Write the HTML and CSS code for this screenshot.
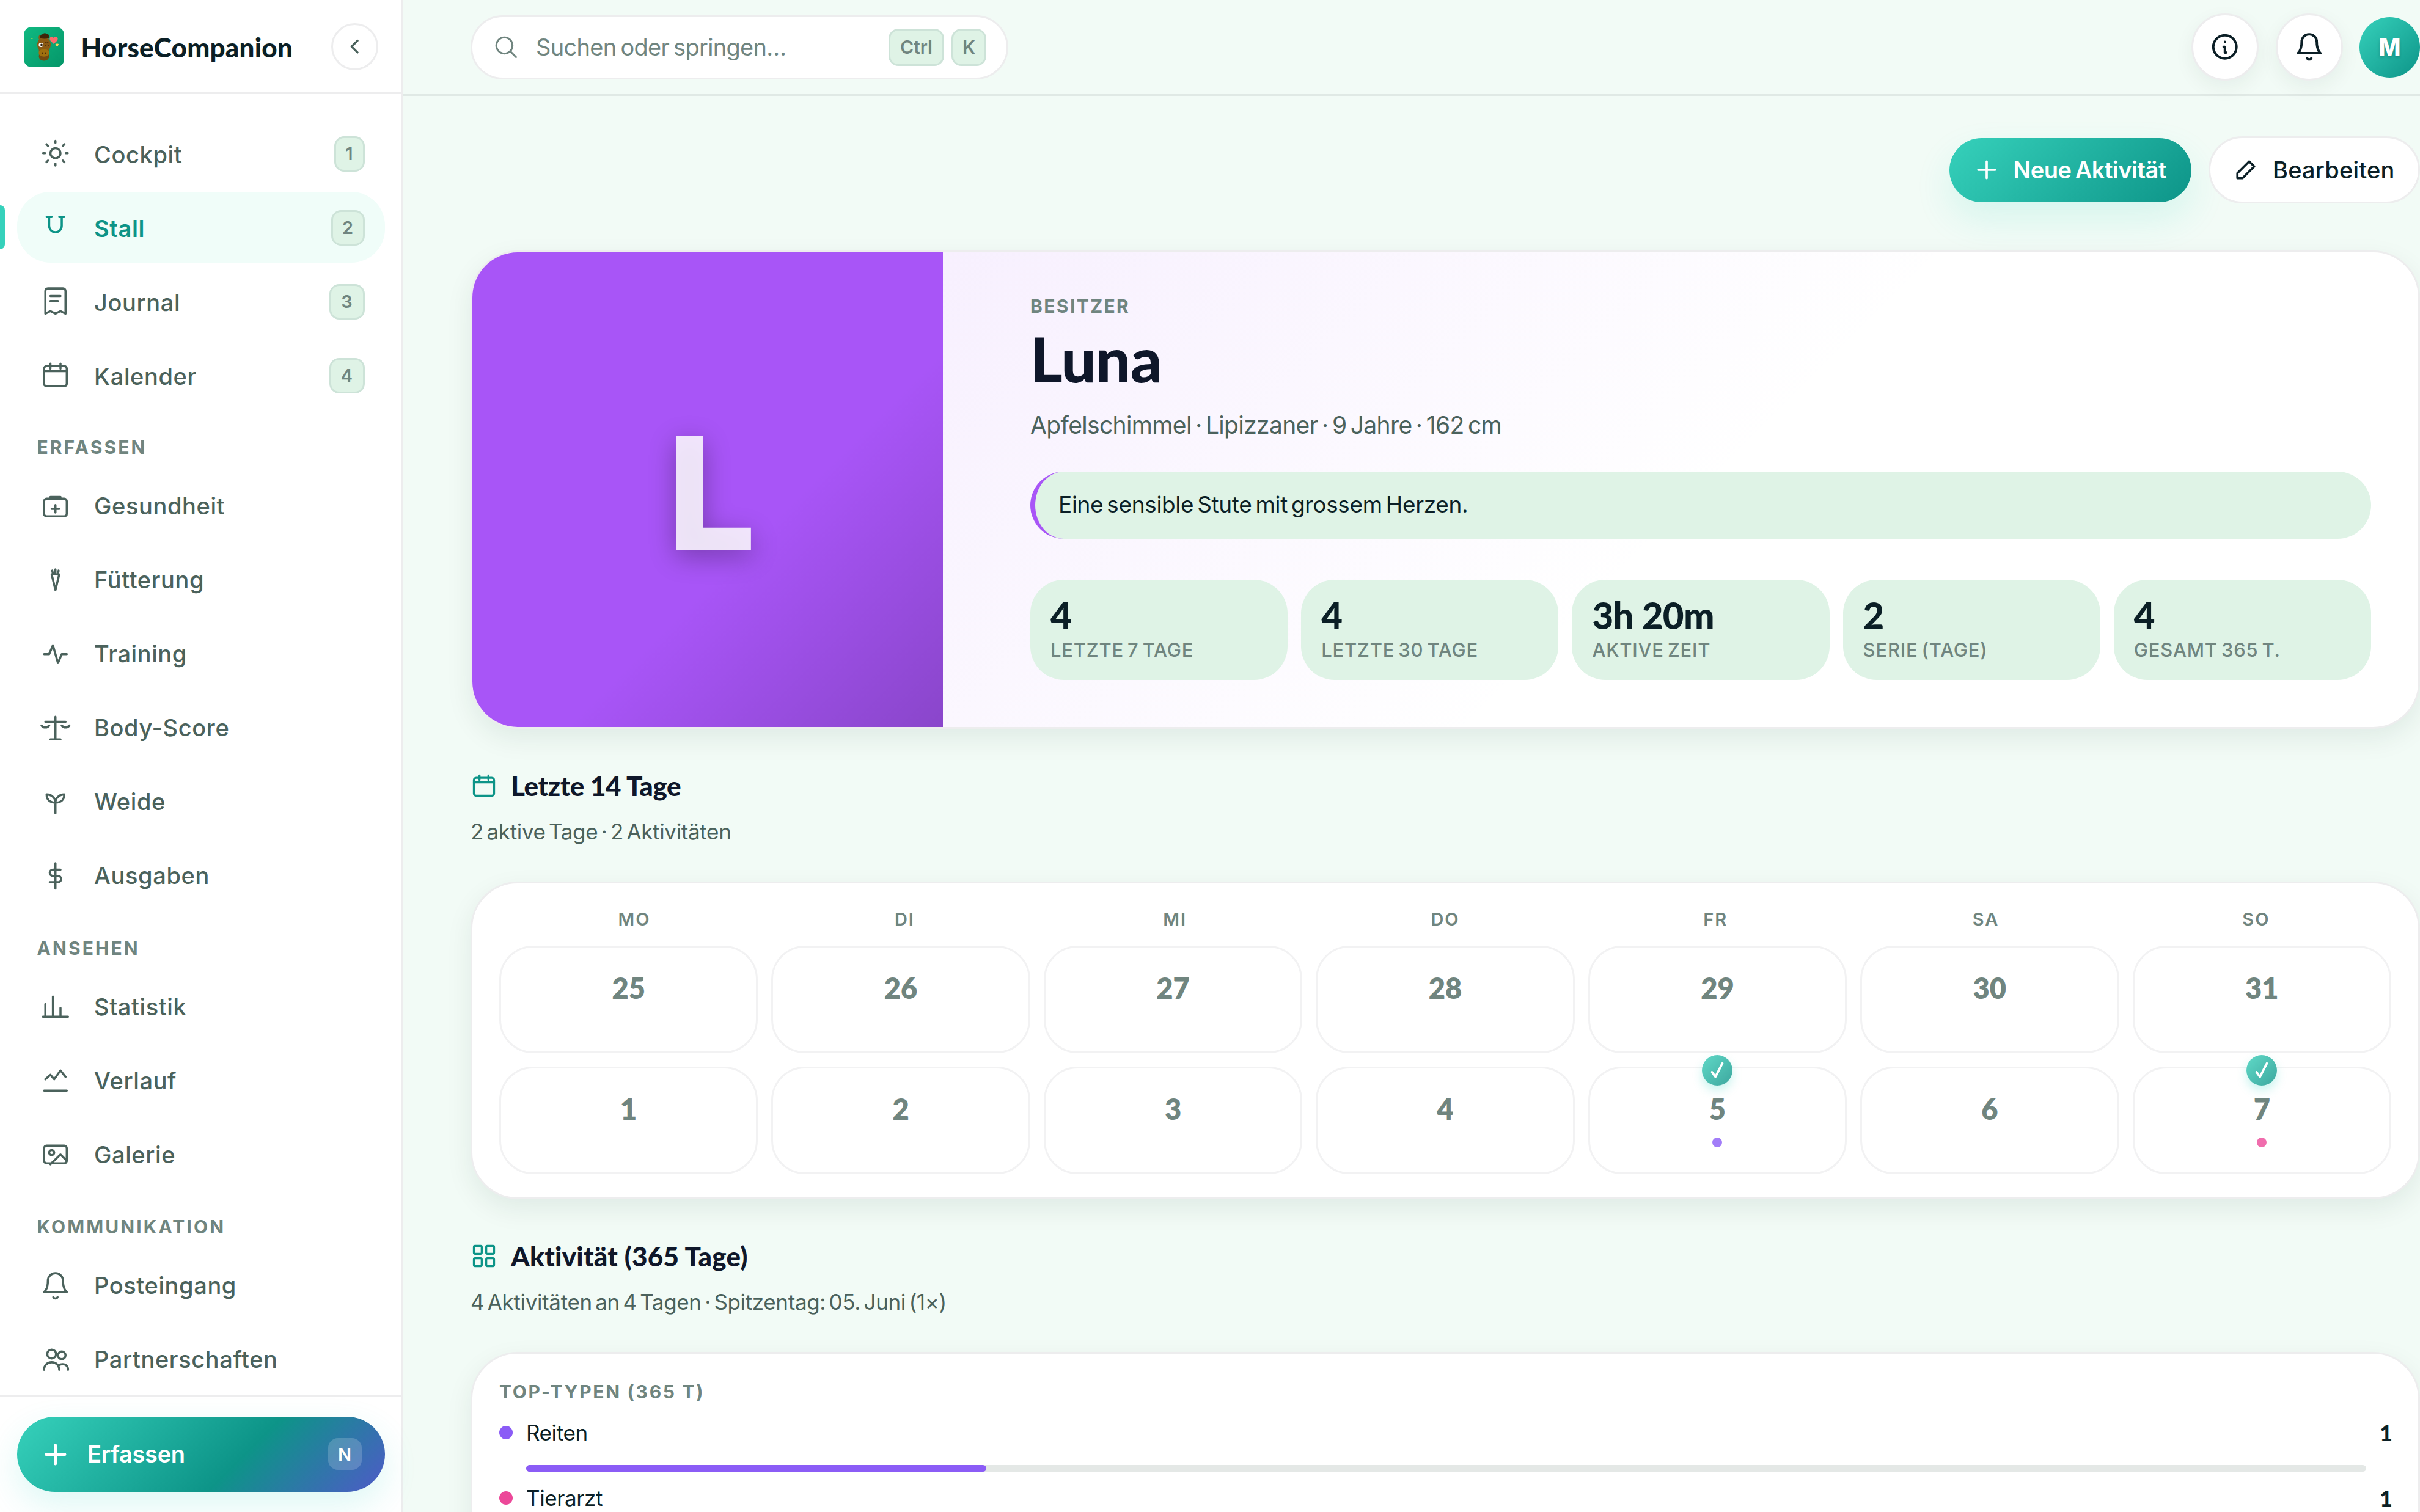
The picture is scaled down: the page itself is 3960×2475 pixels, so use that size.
FILE: index.html
```html
<!DOCTYPE html>
<html lang="de">
<head>
    <meta charset="UTF-8">
    <meta name="viewport" content="width=device-width, initial-scale=1.0">
    <title>Luna - HorseCompanion</title>
    <link rel="stylesheet" href="styles.css">
</head>
<body>
    <!-- Icon-Sprite -->
    <svg class="sprite" aria-hidden="true">
        <symbol id="i-sun" viewBox="0 0 24 24"><circle cx="12" cy="12" r="4"/><path d="M12 2.2v1.6M12 20.2v1.6M2.2 12h1.6M20.2 12h1.6M4.93 4.93l1.2 1.2M17.87 17.87l1.2 1.2M4.93 19.07l1.2-1.2M17.87 6.13l1.2-1.2"/></symbol>
        <symbol id="i-shoe" viewBox="0 0 24 24"><path d="M5 4h4M15 4h4M7 4v7a5 5 0 0 0 10 0V4"/></symbol>
        <symbol id="i-journal" viewBox="0 0 24 24"><path d="M4 22V4a2 2 0 0 1 2-2h12a2 2 0 0 1 2 2v18l-4-2-4 2-4-2zM8 8h8M8 12h6"/></symbol>
        <symbol id="i-cal" viewBox="0 0 24 24"><rect x="3" y="5" width="18" height="16" rx="2"/><path d="M3 9h18M8 3v4M16 3v4"/></symbol>
        <symbol id="i-health" viewBox="0 0 24 24"><rect x="3" y="6" width="18" height="14" rx="2"/><path d="M8 6V4.6h8V6M12 11v6M9 14h6"/></symbol>
        <symbol id="i-carrot" viewBox="0 0 24 24"><path d="M9 7.4h6l-3 12.4zM12 7V3.4M10 7l-.5-2.6M14 7l.5-2.6"/></symbol>
        <symbol id="i-pulse" viewBox="0 0 24 24"><path d="M3 12h4l3-7 4 14 3-7h4"/></symbol>
        <symbol id="i-scale" viewBox="0 0 24 24"><path d="M12 3v18M4 7h16M8 21h8M1 10a3.7 3.7 0 0 0 6 0M17 10a3.7 3.7 0 0 0 6 0"/></symbol>
        <symbol id="i-sprout" viewBox="0 0 24 24"><path d="M12 21v-9M12 12.500C7.500 12.500 5 10 5 6c3.500 0 7 2.500 7 6.500M12 12.500C16.500 12.500 19 10 19 6c-3.500 0-7 2.500-7 6.500"/></symbol>
        <symbol id="i-dollar" viewBox="0 0 24 24"><path d="M12 2v20M16 7h-6a2.500 2.500 0 0 0 0 5h4a2.500 2.500 0 0 1 0 5H7.500"/></symbol>
        <symbol id="i-stats" viewBox="0 0 24 24"><path d="M2 20h20M4 20V10M10 20V4M16 20v-7"/></symbol>
        <symbol id="i-trend" viewBox="0 0 24 24"><path d="M3 20h18M4 11l4-3.500 3 3.500 5-7 4 5"/></symbol>
        <symbol id="i-image" viewBox="0 0 24 24"><rect x="3" y="5" width="18" height="14" rx="2"/><circle cx="9" cy="10.500" r="2"/><path d="M8 19.800l8-7.800 5 5"/></symbol>
        <symbol id="i-bell" viewBox="0 0 24 24"><path d="M6 8a6 6 0 0 1 12 0c0 7 3 9 3 9H3s3-2 3-9M10.300 21a1.940 1.940 0 0 0 3.400 0"/></symbol>
        <symbol id="i-people" viewBox="0 0 24 24"><circle cx="9" cy="7.500" r="3.500"/><circle cx="17" cy="8.500" r="3"/><path d="M3 20c0-3.500 2.500-6 6-6s6 2.500 6 6M14.500 16.500c.9-.7 2-1 3.200-1 2.600 0 4.300 1.800 4.300 4.500"/></symbol>
        <symbol id="i-search" viewBox="0 0 24 24"><circle cx="10.600" cy="10.600" r="7.200"/><path d="M21 21l-5-5"/></symbol>
        <symbol id="i-info" viewBox="0 0 24 24"><circle cx="12" cy="12" r="9.200"/><path d="M12 8v.1M11 12h1v4.500h1"/></symbol>
        <symbol id="i-plus" viewBox="0 0 24 24"><path d="M12 4.500v15M4.500 12h15"/></symbol>
        <symbol id="i-pen" viewBox="0 0 24 24"><path d="M4.500 19.500V15L15 4.500l4.500 4.500L9 19.500z"/></symbol>
        <symbol id="i-grid" viewBox="0 0 24 24"><rect x="3" y="3" width="7" height="7" rx="1"/><rect x="14" y="3" width="7" height="7" rx="1"/><rect x="3" y="14" width="7" height="7" rx="1"/><rect x="14" y="14" width="7" height="7" rx="1"/></symbol>
        <symbol id="i-left" viewBox="0 0 24 24"><path d="M15 6l-6 6 6 6"/></symbol>
        <symbol id="i-check" viewBox="0 0 24 24"><path d="M6 14l4 5.500L18 4"/></symbol>
    </svg>

    <div class="app">
        <aside class="sidebar">
            <div class="sidebar-head">
                <svg class="logo" viewBox="0 0 66 66">
                    <defs>
                        <linearGradient id="lg" x1="0" y1="0" x2="1" y2="1">
                            <stop offset="0" stop-color="#10b981"/>
                            <stop offset="1" stop-color="#059669"/>
                        </linearGradient>
                    </defs>
                    <rect width="66" height="66" rx="13" fill="url(#lg)"/>
                    <path d="M24.500 20q-1-5 1.500-7l3 6z" fill="#8b5a14"/>
                    <ellipse cx="33" cy="29" rx="11" ry="12.500" fill="#8b5a14"/>
                    <path d="M24 34l2 14q7 12 14 0l2-14z" fill="#8b5a14"/>
                    <ellipse cx="33" cy="48" rx="8.500" ry="7.500" fill="#744a10"/>
                    <ellipse cx="33" cy="42.500" rx="8.800" ry="6.200" fill="#a0700f"/>
                    <ellipse cx="30.500" cy="43" rx="1" ry="1.500" fill="#4a2c0a"/>
                    <ellipse cx="35.500" cy="43" rx="1" ry="1.500" fill="#4a2c0a"/>
                    <path d="M27 18q-1-6 4-6 2-3 6-1 5 0 4 7-7 3-14 0z" fill="#3f2408"/>
                    <circle cx="28" cy="29.500" r="3.600" fill="#fff"/>
                    <circle cx="29" cy="29.500" r="1.900" fill="#2a1b0a"/>
                    <path d="M34.500 26q3-2 6 0M35 30.500q3-2.500 6 0" fill="none" stroke="#4a2c0a"/>
                    <path d="M49 28l-6-6q-2-5 2.500-6 2.500 0 3.500 2.300 1-2.300 3.500-2.300 4.500 1 2.500 6z" fill="#ff6b6b"/>
                    <path d="M54.500 25.500l.9 2.200 2.200.2-1.700 1.500.5 2.300-1.900-1.200-2 1.200.6-2.300-1.700-1.500 2.200-.2z" fill="#ffd35a"/>
                    <rect x="12" y="18.500" width="2.500" height="1.200" fill="#a8d84e"/>
                </svg>
                <span class="brand">HorseCompanion</span>
                <button class="collapse"><svg class="icon"><use href="#i-left"/></svg></button>
            </div>

            <nav class="nav">
                <a class="nav-item top-item"><svg class="icon"><use href="#i-sun"/></svg><span class="nav-text">Cockpit</span><kbd class="k1">1</kbd></a>
                <a class="nav-item top-item active"><svg class="icon"><use href="#i-shoe"/></svg><span class="nav-text">Stall</span><kbd class="k2">2</kbd></a>
                <a class="nav-item top-item"><svg class="icon"><use href="#i-journal"/></svg><span class="nav-text">Journal</span><kbd class="k3">3</kbd></a>
                <a class="nav-item top-item"><svg class="icon"><use href="#i-cal"/></svg><span class="nav-text">Kalender</span><kbd class="k3">4</kbd></a>

                <div class="nav-title">ERFASSEN</div>
                <a class="nav-item"><svg class="icon"><use href="#i-health"/></svg><span class="nav-text">Gesundheit</span></a>
                <a class="nav-item"><svg class="icon"><use href="#i-carrot"/></svg><span class="nav-text">Fütterung</span></a>
                <a class="nav-item"><svg class="icon"><use href="#i-pulse"/></svg><span class="nav-text">Training</span></a>
                <a class="nav-item"><svg class="icon"><use href="#i-scale"/></svg><span class="nav-text">Body-Score</span></a>
                <a class="nav-item"><svg class="icon"><use href="#i-sprout"/></svg><span class="nav-text">Weide</span></a>
                <a class="nav-item"><svg class="icon"><use href="#i-dollar"/></svg><span class="nav-text">Ausgaben</span></a>

                <div class="nav-title">ANSEHEN</div>
                <a class="nav-item"><svg class="icon"><use href="#i-stats"/></svg><span class="nav-text">Statistik</span></a>
                <a class="nav-item"><svg class="icon"><use href="#i-trend"/></svg><span class="nav-text">Verlauf</span></a>
                <a class="nav-item"><svg class="icon"><use href="#i-image"/></svg><span class="nav-text">Galerie</span></a>

                <div class="nav-title">KOMMUNIKATION</div>
                <a class="nav-item"><svg class="icon"><use href="#i-bell"/></svg><span class="nav-text">Posteingang</span></a>
                <a class="nav-item"><svg class="icon"><use href="#i-people"/></svg><span class="nav-text">Partnerschaften</span></a>
            </nav>

            <div class="sidebar-foot">
                <button class="capture">
                    <svg class="icon"><use href="#i-plus"/></svg>
                    <span class="capture-text">Erfassen</span>
                    <kbd>N</kbd>
                </button>
            </div>
        </aside>

        <div class="main">
            <header class="topbar">
                <div class="search">
                    <svg class="icon"><use href="#i-search"/></svg>
                    <span class="search-text">Suchen oder springen…</span>
                    <kbd class="key-ctrl">Ctrl</kbd>
                    <kbd class="key-k">K</kbd>
                </div>
                <div class="topbar-right">
                    <button class="round"><svg class="icon"><use href="#i-info"/></svg></button>
                    <button class="round"><svg class="icon"><use href="#i-bell"/></svg></button>
                    <div class="avatar">M</div>
                </div>
            </header>

            <main class="content">
                <div class="actions">
                    <button class="btn btn-primary"><svg class="icon"><use href="#i-plus"/></svg><span>Neue Aktivität</span></button>
                    <button class="btn btn-plain"><svg class="icon"><use href="#i-pen"/></svg><span>Bearbeiten</span></button>
                </div>

                <section class="card hero">
                    <div class="hero-media"><span>L</span></div>
                    <div class="hero-body">
                        <div class="eyebrow">BESITZER</div>
                        <h1>Luna</h1>
                        <p class="meta">Apfelschimmel · Lipizzaner · 9 Jahre · 162 cm</p>
                        <div class="quote"><span>Eine sensible Stute mit grossem Herzen.</span></div>
                        <div class="stats">
                            <div class="stat"><b>4</b><span>LETZTE 7 TAGE</span></div>
                            <div class="stat"><b>4</b><span>LETZTE 30 TAGE</span></div>
                            <div class="stat"><b>3h 20m</b><span>AKTIVE ZEIT</span></div>
                            <div class="stat"><b>2</b><span>SERIE (TAGE)</span></div>
                            <div class="stat"><b>4</b><span>GESAMT 365 T.</span></div>
                        </div>
                    </div>
                </section>

                <h2 class="section-title"><svg class="icon"><use href="#i-cal"/></svg><span>Letzte 14 Tage</span></h2>
                <p class="section-sub">2 aktive Tage · 2 Aktivitäten</p>

                <section class="card days">
                    <div class="weekdays">
                        <span>MO</span><span>DI</span><span>MI</span><span>DO</span><span>FR</span><span>SA</span><span>SO</span>
                    </div>
                    <div class="day-grid">
                        <div class="day">25</div>
                        <div class="day">26</div>
                        <div class="day">27</div>
                        <div class="day">28</div>
                        <div class="day">29</div>
                        <div class="day">30</div>
                        <div class="day">31</div>
                        <div class="day">1</div>
                        <div class="day">2</div>
                        <div class="day">3</div>
                        <div class="day">4</div>
                        <div class="day">5<i class="dot ride"></i><em class="done"><svg class="icon"><use href="#i-check"/></svg></em></div>
                        <div class="day">6</div>
                        <div class="day">7<i class="dot vet"></i><em class="done"><svg class="icon"><use href="#i-check"/></svg></em></div>
                    </div>
                </section>

                <h2 class="section-title title-year"><svg class="icon"><use href="#i-grid"/></svg><span>Aktivität (365 Tage)</span></h2>
                <p class="section-sub">4 Aktivitäten an 4 Tagen · Spitzentag: 05. Juni (1×)</p>

                <section class="card types">
                    <div class="types-title">TOP-TYPEN (365 T)</div>
                    <div class="type">
                        <i class="type-dot ride"></i><span class="type-name">Reiten</span><b>1</b>
                        <div class="bar"><div class="bar-fill ride" style="width: 25%"></div></div>
                    </div>
                    <div class="type">
                        <i class="type-dot vet"></i><span class="type-name">Tierarzt</span><b>1</b>
                        <div class="bar"><div class="bar-fill vet" style="width: 25%"></div></div>
                    </div>
                </section>
            </main>
        </div>
    </div>
</body>
</html>
```
FILE: styles.css
```css
* {
    box-sizing: border-box;
    margin: 0;
    padding: 0;
}

:root {
    --ink: #0b1f26;
    --title: #0f172a;
    --text: #4b625c;
    --muted: #70857f;
    --line: #ededee;
    --mint: #dff3e6;
    --teal: #0d9488;
}

body {
    height: 100vh;
    overflow: hidden;
    background: #f2fbf6;
    color: var(--ink);
    font-family: "Inter", "Liberation Sans", sans-serif;
    font-size: 38px;
}

button {
    font: inherit;
    border: none;
}

.sprite {
    position: absolute;
    width: 0;
    height: 0;
}

.icon {
    flex: none;
    width: 49.5px;
    height: 49.5px;
    fill: none;
    stroke: currentColor;
    stroke-width: 1.7;
    stroke-linecap: round;
    stroke-linejoin: round;
}

kbd {
    display: flex;
    align-items: center;
    justify-content: center;
    height: 58px;
    font-family: inherit;
    font-size: 29px;
    font-weight: 600;
    color: var(--muted);
    background: var(--mint);
    border: 3px solid #cde3d8;
    border-radius: 16px;
}

.app {
    display: flex;
    height: 100%;
}

/* Sidebar */
.sidebar {
    flex: none;
    display: flex;
    flex-direction: column;
    width: 660px;
    background: #fff;
    border-right: 3px solid var(--line);
}

.sidebar-head {
    flex: none;
    display: flex;
    align-items: center;
    height: 154px;
    padding: 2px 38px 0 38.5px;
    border-bottom: 3px solid var(--line);
}

.logo {
    width: 66px;
    height: 66px;
}

.brand {
    flex: 1;
    margin-left: 28px;
    font-family: "Lato", sans-serif;
    font-size: 44px;
    font-weight: 900;
    letter-spacing: 0.2px;
    white-space: nowrap;
}

.collapse {
    display: flex;
    align-items: center;
    justify-content: center;
    width: 77px;
    height: 77px;
    background: #fff;
    border: 3px solid var(--line);
    border-radius: 50%;
    color: var(--text);
}

.collapse .icon {
    width: 38.5px;
    height: 38.5px;
    stroke-width: 2.2;
}

.nav {
    flex: 1;
    min-height: 0;
    display: flex;
    flex-direction: column;
    gap: 5.5px;
    padding: 39px 27.5px 0;
    overflow: hidden;
}

.nav-item {
    flex: none;
    display: flex;
    align-items: center;
    gap: 38.5px;
    height: 115.5px;
    padding: 0 33px 0 38.5px;
    border-radius: 55px;
    color: var(--text);
    font-weight: 450;
}

.nav-text {
    flex: 1;
    letter-spacing: 0.6px;
}

.top-item .nav-text {
    padding-top: 5px;
}

.top-item kbd {
    margin-top: 2px;
}

.nav-item.active {
    position: relative;
    background: #f0fdf9;
    color: var(--teal);
    font-weight: 600;
}

.nav-item.active::before {
    content: "";
    position: absolute;
    left: -27.5px;
    top: 22px;
    width: 8px;
    height: 71.5px;
    border-radius: 0 8px 8px 0;
    background: #36d1bb;
}

.k1 { width: 50px; }
.k2 { width: 55px; }
.k3 { width: 58px; }

.nav-title {
    flex: none;
    height: 88px;
    padding: 37px 33px 0;
    font-size: 30px;
    line-height: 37px;
    font-weight: 700;
    letter-spacing: 3.1px;
    color: var(--muted);
}

.sidebar-foot {
    flex: none;
    padding: 33px 27px 33px 27.5px;
    border-top: 3px solid var(--line);
}

.capture {
    display: flex;
    align-items: center;
    width: 100%;
    height: 123.5px;
    padding: 0 38.5px;
    border-radius: 62px;
    background: linear-gradient(135deg, #36d1bb, #0d9488 60%, #4f5ac8);
    box-shadow: 0 22px 55px rgba(45, 212, 191, 0.16);
    color: #fff;
    font-weight: 600;
}

.capture .icon {
    stroke-width: 2.2;
}

.capture-text {
    flex: 1;
    margin-left: 27.5px;
    text-align: left;
    letter-spacing: -0.3px;
}

.capture kbd {
    width: 55px;
    height: 52px;
    border: none;
    background: rgba(255, 255, 255, 0.18);
    color: #fff;
}

/* Main */
.main {
    flex: 1;
    min-width: 0;
}

.topbar {
    display: flex;
    align-items: center;
    justify-content: space-between;
    height: 157px;
    padding: 0 0 0 110px;
    border-bottom: 3px solid #e0e9e5;
}

.search {
    display: flex;
    align-items: center;
    width: 880px;
    height: 105px;
    padding: 0 33px;
    background: #fff;
    border: 3px solid var(--line);
    border-radius: 53px;
    color: var(--muted);
}

.search .icon {
    width: 44px;
    height: 44px;
}

.search-text {
    flex: 1;
    margin-left: 27px;
    letter-spacing: -0.7px;
    word-spacing: -3px;
}

.key-ctrl {
    width: 91px;
    height: 61px;
    font-size: 30px;
}

.key-k {
    width: 57px;
    height: 61px;
    margin-left: 12px;
    font-size: 30px;
}

.topbar-right {
    display: flex;
    align-items: center;
    gap: 27.5px;
}

.round {
    display: flex;
    align-items: center;
    justify-content: center;
    width: 110px;
    height: 110px;
    background: #fff;
    border: 3px solid var(--line);
    border-radius: 50%;
    box-shadow: 0 11px 33px rgba(15, 50, 40, 0.06);
    color: var(--ink);
}

.round .icon {
    stroke-width: 1.9;
}

.avatar {
    display: flex;
    align-items: center;
    justify-content: center;
    width: 99px;
    height: 99px;
    border-radius: 50%;
    background: linear-gradient(135deg, #36d1bb, #0d9488);
    color: #fff;
    font-size: 38px;
    font-weight: 800;
    text-shadow: 0 3px 5px rgba(0, 0, 0, 0.2);
}

.content {
    padding: 66px 0 0 110px;
}

.actions {
    display: flex;
    align-items: center;
    justify-content: flex-end;
    gap: 28px;
    height: 110px;
}

.btn {
    display: flex;
    align-items: center;
    gap: 22px;
    border-radius: 55px;
    font-weight: 550;
    white-space: nowrap;
}

.btn .icon {
    width: 44px;
    height: 44px;
    stroke-width: 2;
}

.btn-primary {
    width: 396px;
    height: 105px;
    padding: 0 0 0 38.5px;
    background: linear-gradient(135deg, #36d1bb, #0d9488);
    box-shadow: 0 27px 60px rgba(45, 212, 191, 0.14);
    color: #fff;
    font-weight: 600;
    letter-spacing: -0.5px;
    word-spacing: -3px;
}

.btn-plain {
    width: 346px;
    height: 110px;
    padding: 0 0 0 36px;
    background: #fff;
    border: 3px solid var(--line);
    color: var(--ink);
    letter-spacing: 0.2px;
}

.card {
    background: #fff;
    border: 3px solid var(--line);
    border-radius: 77px;
    box-shadow: 0 16px 44px rgba(15, 50, 40, 0.08);
}

/* Hero */
.hero {
    display: flex;
    height: 783px;
    margin-top: 77px;
    overflow: hidden;
}

.hero-media {
    flex: none;
    display: flex;
    align-items: center;
    justify-content: center;
    width: 770px;
    padding: 9px 0 0 13px;
    background: linear-gradient(135deg, transparent 60%, rgba(0, 0, 0, 0.18)), #a855f7;
    color: rgba(255, 255, 255, 0.85);
    font-size: 257px;
    font-weight: 800;
    text-shadow: 0 11px 44px rgba(0, 0, 0, 0.3);
}

.hero-body {
    flex: 1;
    padding: 66px 77px 0 143px;
    background: linear-gradient(135deg, rgba(168, 85, 247, 0.09), transparent 52%);
}

.eyebrow {
    font-size: 30px;
    line-height: 44px;
    font-weight: 700;
    letter-spacing: 2.4px;
    color: var(--muted);
}

h1 {
    margin-top: 9px;
    font-family: "Lato", sans-serif;
    font-size: 101px;
    line-height: 110px;
    font-weight: 900;
    letter-spacing: -0.5px;
    color: var(--title);
}

.meta {
    margin-top: 24px;
    font-size: 39px;
    line-height: 60px;
    letter-spacing: -0.65px;
    word-spacing: -4px;
    color: var(--text);
}

.quote {
    display: flex;
    align-items: center;
    height: 110px;
    margin-top: 46px;
    padding-left: 38px;
    padding-bottom: 4px;
    background: var(--mint);
    border-left: 8px solid #a855f7;
    border-radius: 55px;
    font-size: 37px;
    letter-spacing: -0.35px;
    word-spacing: -4px;
}

.stats {
    display: grid;
    grid-template-columns: repeat(5, 1fr);
    gap: 22px;
    margin-top: 67px;
}

.stat {
    display: flex;
    flex-direction: column;
    height: 164px;
    padding: 25px 33px 0;
    background: var(--mint);
    border-radius: 55px;
}

.stat b {
    font-family: "Lato", sans-serif;
    font-size: 60px;
    line-height: 66px;
    font-weight: 900;
    letter-spacing: -0.6px;
}

.stat span {
    margin-top: 1px;
    font-size: 31px;
    line-height: 46px;
    font-weight: 500;
    letter-spacing: 0.8px;
    word-spacing: -3px;
    color: var(--muted);
    white-space: nowrap;
}

/* Abschnitte */
.section-title {
    display: flex;
    align-items: center;
    gap: 22px;
    height: 55px;
    margin-top: 65px;
    font-family: "Lato", sans-serif;
    font-size: 44px;
    font-weight: 900;
    letter-spacing: -0.4px;
    color: var(--title);
}

.title-year {
    letter-spacing: 0.2px;
}

.section-title .icon {
    width: 44px;
    height: 44px;
    color: var(--teal);
    stroke-width: 1.8;
}

.section-sub {
    margin-top: 23px;
    font-size: 35px;
    line-height: 50px;
    letter-spacing: -0.35px;
    word-spacing: -4px;
    color: var(--text);
}

/* 14 Tage */
.days {
    height: 520px;
    margin-top: 57px;
    padding: 41px 44px 0;
}

.weekdays {
    display: grid;
    grid-template-columns: repeat(7, 1fr);
    font-size: 29px;
    line-height: 36px;
    font-weight: 600;
    letter-spacing: 2px;
    text-align: center;
    color: var(--muted);
}

.day-grid {
    display: grid;
    grid-template-columns: repeat(7, 1fr);
    gap: 22px;
    margin-top: 25px;
}

.day {
    position: relative;
    display: flex;
    flex-direction: column;
    align-items: center;
    height: 176px;
    padding-top: 34px;
    border: 3px solid #f2f2f3;
    border-radius: 55px;
    font-family: "Lato", sans-serif;
    font-size: 47px;
    line-height: 64px;
    font-weight: 800;
    color: var(--muted);
}

.dot {
    width: 16px;
    height: 16px;
    margin-top: 15px;
    border-radius: 50%;
    opacity: 0.8;
}

.ride { background: #8b5cf6; }
.vet { background: #ec4899; }

.done {
    position: absolute;
    top: -22px;
    left: 50%;
    display: flex;
    align-items: center;
    justify-content: center;
    width: 50px;
    height: 50px;
    margin-left: -25px;
    border-radius: 50%;
    background: linear-gradient(135deg, #5fd9c7, #3da79e);
    box-shadow: 0 8px 16px rgba(45, 212, 191, 0.25);
    color: #fff;
}

.done .icon {
    width: 34px;
    height: 34px;
    stroke-width: 2.6;
}

/* Top-Typen */
.types {
    height: 400px;
    margin-top: 57px;
    padding: 40px 44px 0;
}

.types-title {
    font-size: 30px;
    line-height: 44px;
    font-weight: 700;
    letter-spacing: 2.7px;
    color: var(--muted);
}

.type {
    display: grid;
    grid-template-columns: 22px 1fr 19px;
    grid-template-rows: 62px 11px;
    column-gap: 22px;
    row-gap: 22px;
    align-items: center;
    align-content: start;
    height: 106.5px;
    padding-top: 14px;
    font-size: 35px;
}

.type-dot {
    width: 22px;
    height: 22px;
    border-radius: 50%;
}

.type-name {
    letter-spacing: -0.4px;
}

.type b {
    font-family: "Lato", sans-serif;
    font-size: 36px;
    font-weight: 900;
    text-align: center;
}

.bar {
    grid-column: 2;
    height: 11px;
    border-radius: 6px;
    background: #e4e8e6;
}

.bar-fill {
    height: 100%;
    border-radius: 6px;
}
```
